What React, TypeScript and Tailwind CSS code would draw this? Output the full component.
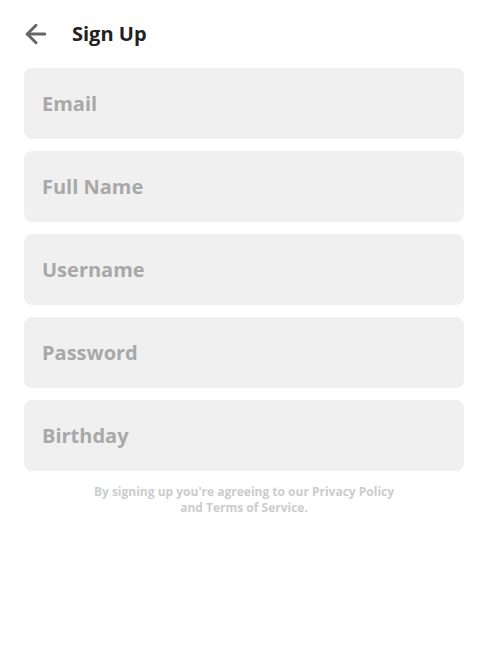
import { ArrowLeft } from "lucide-react";

const fields = ["Email", "Full Name", "Username", "Password", "Birthday"];

export default function App() {
  return (
    <main
      className="min-h-[650px] w-full bg-white px-6"
      style={{ fontFamily: '"Open Sans", "Noto Sans", sans-serif' }}
    >
      <header className="flex h-[68px] items-center gap-[21px]">
        <button type="button" className="-ml-[3px] text-[#666666]">
          <ArrowLeft size={30} strokeWidth={2.4} />
        </button>
        <h1 className="pb-[1px] text-[20px] font-bold text-[#222222]">Sign Up</h1>
      </header>

      <form className="flex flex-col gap-[12px]">
        {fields.map((f) => (
          <input
            key={f}
            placeholder={f}
            type={f === "Password" ? "password" : "text"}
            className="h-[71px] w-full rounded-lg bg-[#f0f0f0] px-[18px] text-[20px] font-bold text-[#333333] outline-none placeholder:text-[#a8a8a8]"
          />
        ))}
      </form>

      <p className="mt-[13px] text-center text-[12px] font-bold leading-[16px] text-[#cccccc]">
        By signing up you're agreeing to our Privacy Policy
        <br />
        and Terms of Service.
      </p>
    </main>
  );
}
